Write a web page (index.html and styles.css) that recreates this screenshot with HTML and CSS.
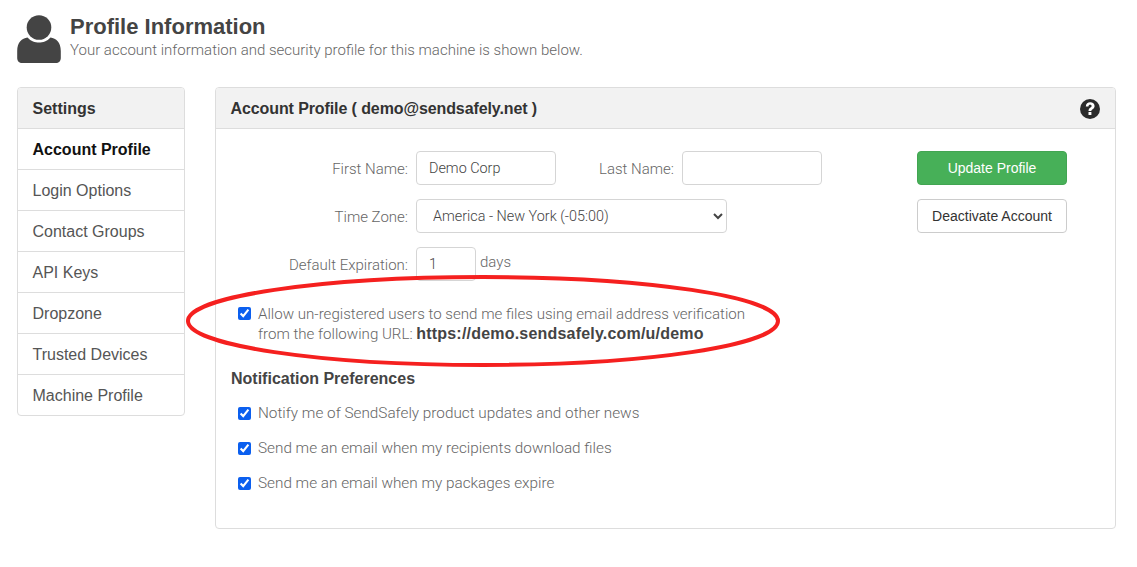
FILE: index.html
```html
<!DOCTYPE html>
<html lang="en">
<head>
<meta charset="utf-8">
<title>Profile Information</title>
<link rel="stylesheet" href="styles.css">
</head>
<body>
<header class="page-head">
  <svg class="user-icon" viewBox="0 0 44 48" aria-hidden="true">
    <circle cx="22" cy="12.5" r="12.3" fill="#444"/>
    <path d="M10.5 22.5C14 26.5 18 27.5 22 27.5s8-1 11.500-5C39 23.500 43.800 27 43.800 36v7c0 3-2 5-5 5H5.200c-3 0-5-2-5-5v-7C.2 27 5 23.500 10.500 22.500z" fill="#444"/>
  </svg>
  <div>
    <h1>Profile Information</h1>
    <p>Your account information and security profile for this machine is shown below.</p>
  </div>
</header>
<main class="layout">
  <nav class="side">
    <div class="side-title">Settings</div>
    <a class="side-item active">Account Profile</a>
    <a class="side-item">Login Options</a>
    <a class="side-item">Contact Groups</a>
    <a class="side-item">API Keys</a>
    <a class="side-item">Dropzone</a>
    <a class="side-item">Trusted Devices</a>
    <a class="side-item">Machine Profile</a>
  </nav>
  <section class="panel">
    <div class="panel-head">
      <span>Account Profile ( demo@sendsafely.net )</span>
      <svg class="help" viewBox="0 0 20 20" aria-hidden="true">
        <circle cx="10" cy="10" r="10" fill="#2b2b2b"/>
        <path d="M5.800 7.400C6 4.700 7.800 3.300 10.200 3.300c2.600 0 4.400 1.500 4.400 3.700 0 1.700-1 2.500-2 3.200-.9.600-1.200.9-1.200 1.900H8.500c0-1.900.7-2.700 1.700-3.400.8-.5 1.400-.9 1.400-1.600 0-.8-.6-1.300-1.500-1.300-1 0-1.600.6-1.700 1.600z" fill="#fff"/>
        <rect x="8.500" y="13" width="2.900" height="3" fill="#fff"/>
      </svg>
    </div>
    <div class="panel-body">
      <div class="form-top">
        <div class="fields">
          <div class="row">
            <label class="lbl">First Name:</label>
            <input class="txt" type="text" value="Demo Corp">
            <label class="lbl lbl-last">Last Name:</label>
            <input class="txt" type="text">
          </div>
          <div class="row">
            <label class="lbl">Time Zone:</label>
            <select class="sel"><option>America - New York (-05:00)</option></select>
          </div>
          <div class="row">
            <label class="lbl lbl-exp">Default Expiration:</label>
            <input class="txt num" type="text" value="1">
            <span class="days">days</span>
          </div>
        </div>
        <div class="actions">
          <button class="btn btn-green" type="button">Update Profile</button>
          <button class="btn" type="button">Deactivate Account</button>
        </div>
      </div>
      <label class="check check-url">
        <input type="checkbox" checked>
        <span>Allow un-registered users to send me files using email address verification<br>from the following URL: <b>https://demo.sendsafely.com/u/demo</b></span>
      </label>
      <h2>Notification Preferences</h2>
      <label class="check"><input type="checkbox" checked><span>Notify me of SendSafely product updates and other news</span></label>
      <label class="check"><input type="checkbox" checked><span>Send me an email when my recipients download files</span></label>
      <label class="check"><input type="checkbox" checked><span>Send me an email when my packages expire</span></label>
    </div>
  </section>
</main>
<svg class="oval" viewBox="0 0 600 96" aria-hidden="true">
  <ellipse cx="298" cy="47" rx="295" ry="44" fill="none" stroke="#f5201f" stroke-width="4"/>
</svg>
</body>
</html>
```
FILE: styles.css
```css
* { box-sizing: border-box; }
html, body { margin: 0; height: 100%; }
body {
  position: relative;
  background: #fff;
  color: #777;
  font-family: "Liberation Sans", Arial, sans-serif;
  font-size: 16px;
  overflow: hidden;
  padding: 15px 21px 0 17px;
}
.page-head { display: flex; gap: 9px; height: 72px; }
.user-icon { width: 44px; height: 48px; flex: none; }
h1 { margin: -1px 0 0; font-size: 22px; line-height: 25px; font-weight: 700; color: #444; }
.page-head p { margin: 1px 0 0; line-height: 20px; color: #666; font-family: Roboto, sans-serif; font-size: 15px; font-weight: 300; }
.layout { display: flex; gap: 30px; align-items: flex-start; }
.side {
  width: 168px; flex: none;
  border: 1px solid #ddd; border-radius: 4px; overflow: hidden;
}
.side-title {
  height: 41px; line-height: 42px; padding-left: 14.5px;
  background: #f2f2f2; border-bottom: 1px solid #ddd;
  font-weight: 700; color: #333;
}
.side-item {
  display: block; height: 41px; line-height: 42px; padding-left: 14.5px;
  border-bottom: 1px solid #ddd; color: #555;
}
.side-item:last-child { height: 40px; border-bottom: 0; }
.side-item.active { font-weight: 700; color: #111; }
.panel {
  flex: 1; height: 442px;
  border: 1px solid #ddd; border-radius: 4px; overflow: hidden;
}
.panel-head {
  display: flex; justify-content: space-between; align-items: center;
  height: 41px; padding: 2px 15px 0 14.5px;
  background: #f2f2f2; border-bottom: 1px solid #ddd;
  font-weight: 700; color: #333; letter-spacing: -0.1px;
}
.help { width: 20px; height: 20px; }
.panel-body { padding: 22px 0 0 15px; }
.form-top { display: flex; justify-content: space-between; padding-right: 48px; }
.fields { display: flex; flex-direction: column; gap: 14px; }
.row { display: flex; align-items: center; height: 34px; }
.lbl { width: 177px; margin-right: 8px; text-align: right; color: #666; padding-top: 1px; font-family: Roboto, sans-serif; font-size: 15px; font-weight: 300; }
.lbl-last { width: 118px; }
.txt {
  width: 140px; height: 34px; padding: 0 12px;
  border: 1px solid #d5d5d5; border-radius: 4px;
  font: 300 14.4px Roboto, sans-serif; color: #444; background: #fff;
}
.num { width: 60px; }
.days { margin-left: 4px; margin-top: -4px; color: #666; font-family: Roboto, sans-serif; font-size: 15px; font-weight: 300; }
.sel {
  width: 311px; height: 34px; padding: 0 12px;
  border: 1px solid #d5d5d5; border-radius: 4px; background-color: #fff;
  font: 300 14.4px Roboto, sans-serif; color: #444;
}
.actions { display: flex; flex-direction: column; gap: 14px; width: 150px; }
.btn {
  height: 34px; width: 150px; padding: 0;
  border: 1px solid #ccc; border-radius: 4px; background: #fff;
  font: 14px "Liberation Sans", Arial, sans-serif; color: #333;
}
.btn-green { background: #47b058; border-color: #42a552; color: #fff; }
.check { display: flex; align-items: flex-start; gap: 7px; height: 20px; margin: 15px 0 0 7px; line-height: 19px; color: #666; font-family: Roboto, sans-serif; font-size: 15.3px; font-weight: 300; }
.check input { width: 13px; height: 13px; margin: 3px 0 0; accent-color: #0b5fef; }
.check-url { height: 40px; margin-top: 23px; font-size: 15.1px; line-height: 20px; }
.check-url b { color: #444; font-family: "Liberation Sans", Arial, sans-serif; font-size: 16px; font-weight: 700; letter-spacing: 0.2px; }
h2 { margin: 25px 0 14px; font-size: 16px; line-height: 20px; font-weight: 700; color: #444; }
.oval { position: absolute; left: 185px; top: 274px; width: 600px; height: 96px; }
```
